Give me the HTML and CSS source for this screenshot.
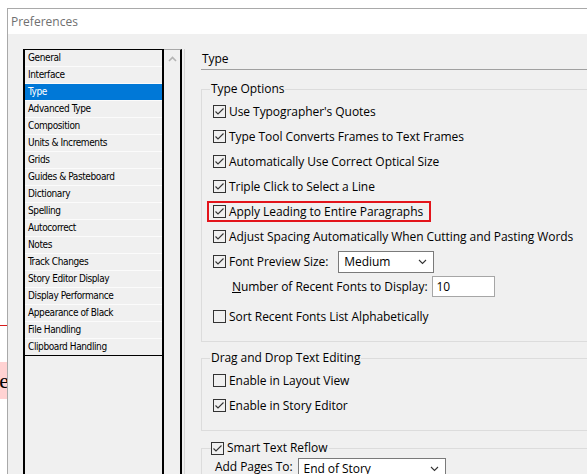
FILE: index.html
```html
<!DOCTYPE html>
<html>
<head>
<meta charset="utf-8">
<link rel="stylesheet" href="styles.css">
</head>
<body>
<div class="screen">
  <div class="backdrop">
    <div class="bd-red"></div>
    <div class="bd-pink"><span>e</span></div>
  </div>
  <div class="window">
    <div class="titlebar">Preferences</div>
    <div class="body">
      <div class="list">
        <ul class="items">
          <li>General</li>
          <li>Interface</li>
          <li class="sel">Type</li>
          <li>Advanced Type</li>
          <li>Composition</li>
          <li>Units &amp; Increments</li>
          <li>Grids</li>
          <li>Guides &amp; Pasteboard</li>
          <li>Dictionary</li>
          <li>Spelling</li>
          <li>Autocorrect</li>
          <li>Notes</li>
          <li>Track Changes</li>
          <li>Story Editor Display</li>
          <li>Display Performance</li>
          <li>Appearance of Black</li>
          <li>File Handling</li>
          <li class="last">Clipboard Handling</li>
        </ul>
        <div class="scroll">
          <svg class="up" width="9" height="6" viewBox="0 0 9 6"><polyline points="1,5 4.5,1.5 8,5" fill="none" stroke="#b4b4b4" stroke-width="1.6"/></svg>
        </div>
      </div>
      <div class="sep"></div>
      <div class="panel">
        <div class="head">Type</div>
        <fieldset class="group g1">
          <legend>Type Options</legend>
          <div class="row"><span class="cb"><svg width="11" height="11" viewBox="0 0 11 11"><polyline points="1.5,5.5 4,8 9.5,2.5" fill="none" stroke="#333" stroke-width="1.1"/></svg></span>Use Typographer's Quotes</div>
          <div class="row"><span class="cb"><svg width="11" height="11" viewBox="0 0 11 11"><polyline points="1.5,5.5 4,8 9.5,2.5" fill="none" stroke="#333" stroke-width="1.1"/></svg></span>Type Tool Converts Frames to Text Frames</div>
          <div class="row"><span class="cb"><svg width="11" height="11" viewBox="0 0 11 11"><polyline points="1.5,5.5 4,8 9.5,2.5" fill="none" stroke="#333" stroke-width="1.1"/></svg></span>Automatically Use Correct Optical Size</div>
          <div class="row"><span class="cb"><svg width="11" height="11" viewBox="0 0 11 11"><polyline points="1.5,5.5 4,8 9.5,2.5" fill="none" stroke="#333" stroke-width="1.1"/></svg></span>Triple Click to Select a Line</div>
          <div class="row"><span class="mark"><span class="cb"><svg width="11" height="11" viewBox="0 0 11 11"><polyline points="1.5,5.5 4,8 9.5,2.5" fill="none" stroke="#333" stroke-width="1.1"/></svg></span>Apply Leading to Entire Paragraphs</span></div>
          <div class="row"><span class="cb"><svg width="11" height="11" viewBox="0 0 11 11"><polyline points="1.5,5.5 4,8 9.5,2.5" fill="none" stroke="#333" stroke-width="1.1"/></svg></span>Adjust Spacing Automatically When Cutting and Pasting Words</div>
          <div class="row"><span class="cb"><svg width="11" height="11" viewBox="0 0 11 11"><polyline points="1.5,5.5 4,8 9.5,2.5" fill="none" stroke="#333" stroke-width="1.1"/></svg></span>Font Preview Size:<span class="select sel-size">Medium<svg class="chev" width="9" height="6" viewBox="0 0 9 6"><polyline points="1,1 4.5,4.5 8,1" fill="none" stroke="#333" stroke-width="1.1"/></svg></span></div>
          <div class="row indent"><span><u>N</u>umber of Recent Fonts to Display:</span><span class="input">10</span></div>
          <div class="row sort"><span class="cb"></span>Sort Recent Fonts List Alphabetically</div>
        </fieldset>
        <fieldset class="group g2">
          <legend>Drag and Drop Text Editing</legend>
          <div class="row"><span class="cb"></span>Enable in Layout View</div>
          <div class="row"><span class="cb"><svg width="11" height="11" viewBox="0 0 11 11"><polyline points="1.5,5.5 4,8 9.5,2.5" fill="none" stroke="#333" stroke-width="1.1"/></svg></span>Enable in Story Editor</div>
        </fieldset>
        <fieldset class="group g3">
          <legend><span class="cb"><svg width="11" height="11" viewBox="0 0 11 11"><polyline points="1.5,5.5 4,8 9.5,2.5" fill="none" stroke="#333" stroke-width="1.1"/></svg></span>Smart Text Reflow</legend>
          <div class="addpages"><span class="ap-label">Add Pages To:</span><span class="select sel-pages">End of Story<svg class="chev" width="9" height="6" viewBox="0 0 9 6"><polyline points="1,1 4.5,4.5 8,1" fill="none" stroke="#333" stroke-width="1.1"/></svg></span></div>
        </fieldset>
      </div>
    </div>
  </div>
</div>
</body>
</html>
```
FILE: styles.css
```css
* { box-sizing: border-box; }
html, body { margin: 0; padding: 0; background: #fff; }
.screen {
  width: 587px; height: 474px; overflow: hidden;
  display: flex;
  font-family: "Open Sans", "Noto Sans", sans-serif;
  font-size: 12px; color: #000;
}
.backdrop { width: 7px; flex-shrink: 0; display: flex; flex-direction: column; }
.bd-red { margin-top: 325px; height: 1px; background: #d81b1b; }
.bd-pink {
  margin-top: 36px; height: 37px; background: #ffd2d2;
  display: flex; justify-content: flex-end; overflow: hidden;
}
.bd-pink span {
  flex-shrink: 0; font-family: "Liberation Serif", serif; font-size: 22px;
  line-height: 37px; margin-right: -2px;
}
.window {
  flex: 1; min-width: 0; margin-top: 8px;
  border-top: 1px solid #a9a9a9; border-left: 1px solid #a9a9a9;
  display: flex; flex-direction: column;
}
.titlebar {
  height: 25px; line-height: 25px; background: #fff; padding-left: 3px;
  color: #707070; font-size: 12px;
}
.body {
  flex: 1; background: #f0f0f0; display: flex;
  padding: 15px 0 0 15px;
}
.list { display: flex; flex-shrink: 0; }
.items {
  list-style: none; margin: 0; padding: 0;
  width: 141px;
  border-left: 2px solid #000; border-right: 2px solid #000; border-top: 1px solid #000;
  font-family: "DejaVu Sans Condensed", "DejaVu Sans", sans-serif;
  font-size: 10px; letter-spacing: -0.4px;
}
.items li {
  height: 17px; line-height: 16px; padding-left: 3px;
  border-bottom: 1px solid #fbfbfb; white-space: nowrap;
}
.items li.sel { background: #0078d7; color: #fff; }
.items li.last { border-bottom-color: #000; }
.scroll {
  width: 18px; border-right: 2px solid #000; border-top: 1px solid #a8a8a8;
  display: flex; justify-content: center; align-items: flex-start;
}
.scroll .up { margin-top: 6px; }
.sep { width: 1px; margin-left: 2px; background: #d6d6d6; flex-shrink: 0; }
.panel { flex: 1; min-width: 0; padding-left: 16px; letter-spacing: -0.06px; }
.head {
  height: 21px; line-height: 19px; padding-left: 1px;
  border-bottom: 1px solid #a0a0a0;
}
.group {
  margin: 0; width: 430px; border: 1px solid #dcdcdc;
  padding: 2px 0 12px 11px; min-width: 0;
}
.group legend {
  padding: 0 1px; margin-left: -3px; line-height: 16px;
}
.g1 { margin-top: 11px; }
.g2 { margin-top: 8px; padding-top: 2px; }
.g3 { margin-top: 9px; padding-top: 0; }
.g3 legend { display: flex; align-items: center; margin-left: -2px; padding: 0 2px 0 0; }
.row {
  height: 25px; display: flex; align-items: center; white-space: nowrap;
}
.cb {
  width: 13px; height: 13px; border: 1px solid #333; flex-shrink: 0;
  margin-right: 3px; display: inline-flex; align-items: center; justify-content: center;
}
.mark {
  display: flex; align-items: center; height: 21px;
  margin-left: -6px; padding: 0 6px 0 4px;
  border: 2px solid #e3141b;
}
.select {
  display: inline-flex; align-items: center; justify-content: space-between;
  height: 22px; background: #fff; border: 1px solid #7a7a7a;
  padding: 0 6px 0 5px;
}
.sel-size { width: 96px; margin-left: 10px; }
.indent { padding-left: 19px; }
.input {
  display: inline-flex; align-items: center;
  width: 63px; height: 21px; margin-left: 4px; padding-left: 4px;
  background: #fff; border: 1px solid #a6a6a6;
}
.sort { margin-top: 5px; }
.addpages {
  display: flex; align-items: flex-start; white-space: nowrap;
  padding-left: 2px;
}
.ap-label { line-height: 14px; margin-top: 4px; }
.sel-pages { width: 148px; margin-left: 5px; margin-top: 2px; line-height: 14px; }
```
